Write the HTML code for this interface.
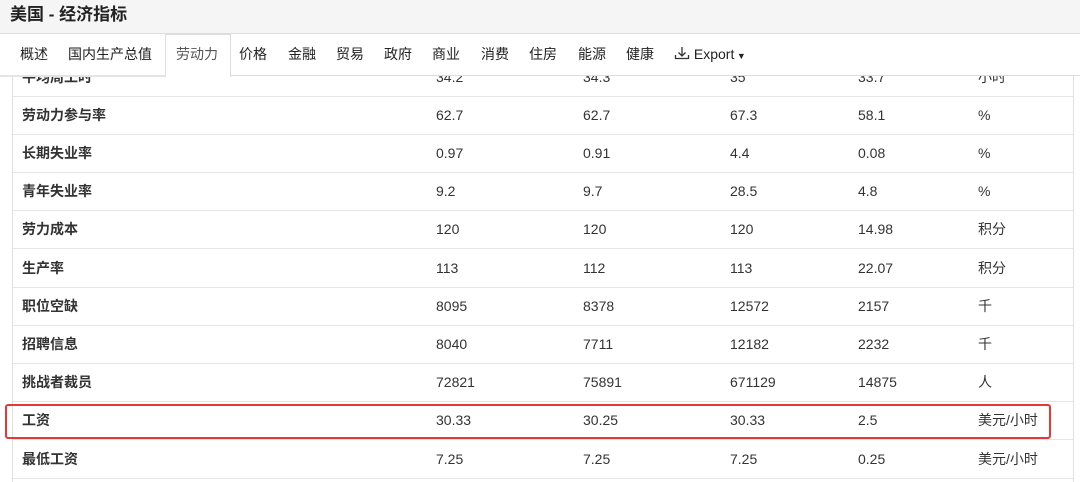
<!DOCTYPE html>
<html><head><meta charset="utf-8"><style>
body{margin:0;width:1080px;height:482px;overflow:hidden;background:#fff;font-family:"Liberation Sans","Noto Sans CJK SC",sans-serif;font-size:14px;color:#333;position:relative}
.hdr{position:absolute;left:0;top:0;width:1080px;height:33px;background:#f5f5f5;border-bottom:1px solid #ddd;z-index:3}
.hdr b{position:absolute;left:10px;top:5px;font-size:17px;color:#222;line-height:20px}
.tabs{position:absolute;left:0;top:34px;width:1080px;height:41px;background:#fff;border-bottom:1px solid #ddd;z-index:3}
.tabs span{position:absolute;top:12px;font-size:14px;color:#222;line-height:16px}
.act{position:absolute;left:165px;top:34px;width:64px;height:42px;background:#fff;border:1px solid #ddd;border-bottom:none;z-index:4}
.shadow{position:absolute;left:0;top:75px;width:166px;height:2px;background:#e4e4e4;z-index:3}
.row{position:absolute;left:12px;width:1061px;height:38px;border-bottom:1px solid #e6e6e6;z-index:1}
.row span{position:absolute;top:11px;line-height:16px}
.vl{position:absolute;left:12px;top:60px;width:1px;height:422px;background:#e0e0e0;z-index:2}
.vr{position:absolute;left:1073px;top:60px;width:1px;height:422px;background:#e0e0e0;z-index:2}
.red{position:absolute;left:5px;top:404px;width:1042px;height:31px;border:2px solid #e53935;border-radius:3px;z-index:5}
</style></head><body>
<div class="hdr"><b>美国 - 经济指标</b></div>
<div class="tabs">
<span style="left:20px">概述</span><span style="left:68px">国内生产总值</span>
<span style="left:239px">价格</span><span style="left:288px">金融</span><span style="left:336px">贸易</span><span style="left:384px">政府</span><span style="left:432px">商业</span><span style="left:481px">消费</span><span style="left:529px">住房</span><span style="left:578px">能源</span><span style="left:626px">健康</span>
<span style="left:674px"><svg width="16" height="14" viewBox="0 0 16 14" style="vertical-align:-1px"><path d="M8 1v9M4.5 6.5L8 10l3.5-3.5M1.5 9v3.5h13V9" fill="none" stroke="#333" stroke-width="1.3"/></svg> Export<span style="position:static;font-size:9px"> ▼</span></span>
</div>
<div class="act"><span style="position:absolute;left:10px;top:11px;color:#555;line-height:16px">劳动力</span></div>
<div class="shadow"></div>
<div class="vl"></div><div class="vr"></div>
<div class="row" style="top:58px"><span style="left:10px;font-weight:bold">平均周工时</span><span style="left:424px">34.2</span><span style="left:571px">34.3</span><span style="left:718px">35</span><span style="left:846px">33.7</span><span style="left:966px">小时</span></div>
<div class="row" style="top:96px"><span style="left:10px;font-weight:bold">劳动力参与率</span><span style="left:424px">62.7</span><span style="left:571px">62.7</span><span style="left:718px">67.3</span><span style="left:846px">58.1</span><span style="left:966px">%</span></div>
<div class="row" style="top:134px"><span style="left:10px;font-weight:bold">长期失业率</span><span style="left:424px">0.97</span><span style="left:571px">0.91</span><span style="left:718px">4.4</span><span style="left:846px">0.08</span><span style="left:966px">%</span></div>
<div class="row" style="top:172px"><span style="left:10px;font-weight:bold">青年失业率</span><span style="left:424px">9.2</span><span style="left:571px">9.7</span><span style="left:718px">28.5</span><span style="left:846px">4.8</span><span style="left:966px">%</span></div>
<div class="row" style="top:210px"><span style="left:10px;font-weight:bold">劳力成本</span><span style="left:424px">120</span><span style="left:571px">120</span><span style="left:718px">120</span><span style="left:846px">14.98</span><span style="left:966px">积分</span></div>
<div class="row" style="top:249px"><span style="left:10px;font-weight:bold">生产率</span><span style="left:424px">113</span><span style="left:571px">112</span><span style="left:718px">113</span><span style="left:846px">22.07</span><span style="left:966px">积分</span></div>
<div class="row" style="top:287px"><span style="left:10px;font-weight:bold">职位空缺</span><span style="left:424px">8095</span><span style="left:571px">8378</span><span style="left:718px">12572</span><span style="left:846px">2157</span><span style="left:966px">千</span></div>
<div class="row" style="top:325px"><span style="left:10px;font-weight:bold">招聘信息</span><span style="left:424px">8040</span><span style="left:571px">7711</span><span style="left:718px">12182</span><span style="left:846px">2232</span><span style="left:966px">千</span></div>
<div class="row" style="top:363px"><span style="left:10px;font-weight:bold">挑战者裁员</span><span style="left:424px">72821</span><span style="left:571px">75891</span><span style="left:718px">671129</span><span style="left:846px">14875</span><span style="left:966px">人</span></div>
<div class="row" style="top:401px"><span style="left:10px;font-weight:bold">工资</span><span style="left:424px">30.33</span><span style="left:571px">30.25</span><span style="left:718px">30.33</span><span style="left:846px">2.5</span><span style="left:966px">美元/小时</span></div>
<div class="row" style="top:440px"><span style="left:10px;font-weight:bold">最低工资</span><span style="left:424px">7.25</span><span style="left:571px">7.25</span><span style="left:718px">7.25</span><span style="left:846px">0.25</span><span style="left:966px">美元/小时</span></div>
<div class="red"></div>
</body></html>
